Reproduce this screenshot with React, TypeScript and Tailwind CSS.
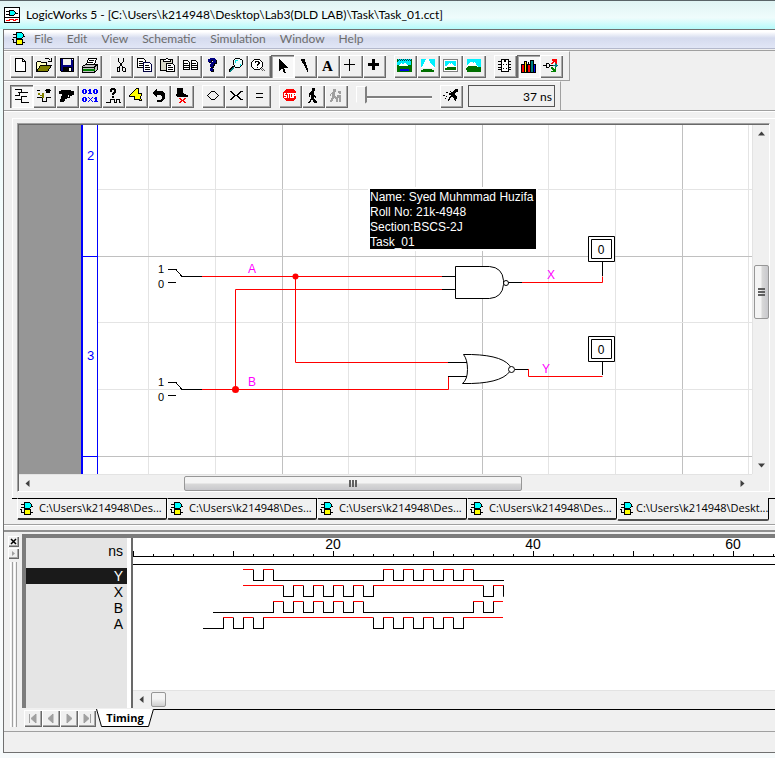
import React from "react";

type IconName = keyof typeof glyphs;

const glyphs = {
  file: (
    <g fill="#fff" stroke="#000">
      <path d="M5.500 3.500h7l3 3v10h-10z" />
      <path d="M12.500 3.500v3h3" fill="none" />
    </g>
  ),
  open: (
    <g stroke="#000" fill="none">
      <path d="M3.500 15.500v-8l1-1h3l1 1h5v3" fill="#ffffc0" />
      <path d="M3.500 16.500l4-6h11l-4 6z" fill="#808000" />
      <path d="M11.500 4.500l1-1h3l2 2M18.500 3v4M15 6.500h4" />
    </g>
  ),
  save: (
    <g>
      <path d="M4.500 3.500h13v13h-12l-1-1z" fill="#000080" stroke="#000" />
      <path d="M7 4h8v6H7z" fill="#f0f0f0" />
      <path d="M7 12h9v4H7z" fill="#000" />
      <path d="M13 13h2v3h-2zM16 4h1v1h-1z" fill="#fff" />
    </g>
  ),
  print: (
    <g stroke="#000" fill="#fff">
      <path d="M7.500 9.500l2-6h8l-2 6z" />
      <path d="M10 5.500h5M9 7.500h5" />
      <path d="M3.500 11.500l3-2h12v5l-3 3h-12z" fill="#c0c0c0" />
      <path d="M4 12.500h11l3-3M15.500 12v5" fill="none" />
      <path d="M4 14h11v1H4z" fill="#008000" stroke="#008000" />
    </g>
  ),
  cut: (
    <g stroke="#000" fill="none">
      <path d="M8.500 3v3l5 7M13.500 3v3l-5 7" />
      <path d="M7.500 12.500h2v4h-2zM12.500 12.500h2l1 1v3h-2l-1-1z" />
    </g>
  ),
  copy: (
    <g stroke="#000" fill="#fff">
      <path d="M4.500 3.500h6l2 2v7h-8z" />
      <path d="M6 6.500h4M6 8.500h5M6 10.500h5" />
      <path d="M10.500 7.500h6l2 2v7h-8z" stroke="#000040" />
      <path d="M12 10.500h4M12 12.500h5M12 14.500h5" />
    </g>
  ),
  paste: (
    <g stroke="#000" fill="none">
      <path d="M4.500 4.500h12v11h-12z" fill="#d8d8c8" />
      <path d="M7.500 6.500v-2h2l1-1h1l1 1h2v2z" fill="#fff" />
      <path d="M10.500 8.500h6l2 2v6h-8z" fill="#fff" />
      <path d="M12 10.500h3M12 12.500h5M12 14.500h5" />
    </g>
  ),
  duplicate: (
    <g stroke="#000" fill="#fff">
      <path d="M4.500 5.500h4l2 2v7h-6zM12.500 5.500h4l2 2v7h-6z" />
      <path d="M5 8.500h4M5 10.500h5M5 12.500h5M13 8.500h4M13 10.500h5M13 12.500h5" />
    </g>
  ),
  help: (
    <g>
      <path d="M7 5h1V4h6v1h1v4h-2v2h-1v2h-3v-3h1V8h2V6h-2v2H7zM9 14h3v3H9z" fill="#000" />
      <path d="M6 4h2V3h5v1h1v4h-2v2h-1v2H8V9h1V7h2V5H9v2H6zM8 13h3v3H8z" fill="#000080" />
    </g>
  ),
  zoom: (
    <g stroke="#000" fill="none">
      <path d="M10.500 3.500h4l3 2v4l-3 3h-4l-2-3v-4z" fill="#e8ffff" />
      <path d="M10.500 8v-2l2-1M14.500 10.500h1v-2" stroke="#00e0e0" />
      <path d="M9 11.500l-5 5M8 11.500l-4 4" stroke="#000" />
      <path d="M9 12.500l-4 4" stroke="#008080" />
    </g>
  ),
  find: (
    <g stroke="#000" fill="none">
      <path d="M6.500 4.500h5l3 3v4l-3 3h-5l-3-3v-4z" fill="#fff" />
      <path d="M7 7.500l1-1h2l1 1v1l-2 2M9 12v1" />
      <path d="M13 14l2 2M14 13l3 3" stroke="#606060" />
    </g>
  ),
  pointer: <path d="M8 4v12l3-3 2 5h2l-2-5h4z" fill="#000" />,
  pencil: <path d="M7 4h3l1 1v2h1v3h1v3h1v4h-1v-2h-1v-2h-1v-2h-1V9H9V8H8V6H7z" fill="#000" />,
  text: (
    <text x="5" y="16" fontFamily="Liberation Serif, serif" fontSize="15" fontWeight="700">
      A
    </text>
  ),
  plusThin: <path d="M9.500 4v12M4 9.500h11" stroke="#000" />,
  plusBold: <path d="M9 4h3v4h4v3h-4v4H9v-4H5V8h4z" fill="#000" />,
  sceneHigh: (
    <g>
      <path d="M3 4h15v13H3z" fill="#007000" />
      <path d="M4 4h13v6h1H3z" fill="#00e8f8" />
      <path d="M3.500 5.500h14" stroke="#004848" strokeDasharray="1 1" />
      <path d="M4.500 4.500h14" stroke="#004848" strokeDasharray="1 1" />
      <path d="M4 11l3-3 2 1 2-2 3 4z" fill="#fff" />
      <path d="M6 14h8v1H6z" fill="#0000e0" stroke="#0000e0" />
    </g>
  ),
  sceneMid: (
    <g>
      <path d="M4 4h14v9H4z" fill="#00f0ff" />
      <path d="M9 4h3l1 3 2 3 3 3H4l2-3z" fill="#fff" />
      <path d="M4 15l3-1h6l4 1v2H4z" fill="#007000" />
    </g>
  ),
  sceneFrame: (
    <g>
      <path d="M3.500 4.500h14v12h-14z" fill="#fff" stroke="#808080" />
      <path d="M5 6h11v5H5z" fill="#00f0ff" />
      <path d="M5 12l4-4 1 1 2-1 3 4z" fill="#fff" />
      <path d="M5 13l3-1h8v3H5z" fill="#007000" />
    </g>
  ),
  sceneLow: (
    <g>
      <path d="M4 4h14v8H4z" fill="#00f0ff" />
      <path d="M4 10l3-3h2l1 1 2-1 3 5H4z" fill="#fff" />
      <path d="M3 13l2-2h8l2 1h3v5H4z" fill="#007000" />
    </g>
  ),
  chip: (
    <g stroke="#000" fill="#fff">
      <path d="M4 6.500h13M4 9.500h13M4 12.500h13M4 14.500h13" />
      <path d="M7.500 4.500h7v12h-7z" />
      <path d="M10.500 5v1h1v-1" />
      <path d="M9 9.500h1M12 9.500h1M9 13.500h1M12 13.500h1" />
    </g>
  ),
  books: (
    <g stroke="#000">
      <path d="M4.500 9.500h3v8h-3zM10.500 9.500h3v8h-3z" fill="#f00" />
      <path d="M7.500 6.500h2v11h-2z" fill="#ffe000" />
      <path d="M13.500 5.500h3v12h-3z" fill="#008080" />
      <path d="M16.500 9.500h2v8h-2z" fill="#00f" />
      <path d="M11.500 7v2" fill="none" />
    </g>
  ),
  probe: (
    <g fill="none">
      <path d="M3 10.500h3M6.500 8.500h2l1 1v2l-1 1h-2zM10 10.500h3" stroke="#000" />
      <path d="M11 8h1V7h1V6h-1V4h5v5h-2V7h-1v1h-1v1h-2z" fill="#f00" />
      <path d="M13 10h2V8h1v1h1v1h1v1h-1v1h-1v1h-1v-2h-2z" fill="#008080" />
      <path d="M11 12h2v1h1v1h1v-2h1v5h-5v-1h2v-1h-1v-1h-1z" fill="#008000" />
    </g>
  ),
  waves: (
    <path d="M5 4.500h6v3h7M5 10.500h4v-3M8 7.500h4M11.500 11h5M5 14.500h6v-4M11.500 14v3h7" stroke="#000" fill="none" />
  ),
  waveEdit: (
    <g fill="none" stroke="#000">
      <path d="M4 5.500h3M12 5.500h6M4 12.500h5v4h4v-4h5" />
      <path d="M13 4h3v3h-3z" fill="#000" />
      <path d="M5 8h2v2h2V8h2v5H9v-2H7v-1H5z" fill="#808000" stroke="none" />
    </g>
  ),
  gun: <path d="M3 6h2V5h10v1h3v4h-2v1h-2v2h-3v1H9v2H8v1H4v-3h1v-3h1V9H3zM12 10v2h1v-2z" fill="#000" />,
  binary: (
    <g fill="#00f" fillRule="evenodd">
      <path d="M4 4h3v1h1v3H7v1H4V8H3V5h1zM5 5v3h1V5zM10 4h2v4h1v1H9V8h1V6H9V5h1zM15 4h3v1h1v3h-1v1h-3V8h-1V5h1zM16 5v3h1V5z" />
      <path d="M4 12h3v1h1v3H7v1H4v-1H3v-3h1zM5 13v3h1v-3zM9 12h1v1h1v1h1v-1h1v-1h1v1h-1v1h-1v1h1v1h1v1h-1v-1h-1v-1h-1v1h-1v1H9v-1h1v-1h1v-1h-1v-1H9zM16 12h2v4h1v1h-4v-1h1v-2h-1v-1h1z" />
    </g>
  ),
  query: (
    <g fill="none" stroke="#000">
      <path d="M8 4h1V3h4v1h1v4h-1v1h-1v1h-2V8h1V7h1V5h-2v2H8z" fill="#000" stroke="none" />
      <path d="M10 11h2v2h-2z" fill="#000" stroke="none" />
      <path d="M4 17.500h4v-3h4v3h2v-3h3v3h2" />
    </g>
  ),
  bolt: <path d="M11.500 3.500l-7 7v1h5v3h3l4 1-1-3 1-3v-1h-3v-5z" fill="#ff0" stroke="#000" />,
  undo: <path d="M4 8l5-5v3h5l3 3v5l-4 3H9v-2h3l2-2v-2l-2-1H9v3z" fill="#000" />,
  kick: (
    <g>
      <path d="M6 3h6v5h1v1h2v1h2v2H6v-1H5V9h1z" fill="#000" />
      <path d="M8 13h2v1h1v1h1v-1h1v-1h2v1h-1v1h-1v1h1v1h1v1h-2v-1h-1v-1h-1v1h-1v1H8v-1h1v-1h1v-1H9v-1H8z" fill="#f00" />
    </g>
  ),
  diamond: <path d="M5.500 10.500l4-4h3l4 4-4 4h-3z" stroke="#000" fill="none" />,
  cross: <path d="M5 6.500h1l4 4h2l4-4h2M5 14.500h1l4-4M12 10.500l4 4h2" stroke="#000" fill="none" />,
  equal: <path d="M8 8.500h7M8 12.500h7" stroke="#000" />,
  stop: (
    <g>
      <path d="M8 4h6l3 3v6l-3 3H8l-4-3V7z" fill="#f00" />
      <path d="M7 8.500H5.500v2H7v2H5M8 8.500h3M9.500 8v5M11.500 8.500h2v4h-2zM14.500 13V8.500h2v2h-2" fill="none" stroke="#fff" />
    </g>
  ),
  walk: (
    <path d="M10 3h3v3h-1v4l2 2v1l-2-1v2l3 3v1h-3l-2-4-2 4H6v-1h1l2-4V9L8 12H7V9l2-3h1z" fill="#000" />
  ),
  run: (
    <path d="M8 4h3v3h-1v4l3 2v4h-2v-3l-2-1-2 4H5v-1l2-4V8l-1 3H5V9l3-2zM13 6h3v3h-2zM12 10h4v7h-2v-4h-2z" fill="#a0a0a0" />
  ),
  sprint: (
    <g>
      <path d="M15 4h3v3h-2l-1 3 2 2-1 4h-1l-1-3-3-1-2 4H8v-1l3-5h-2V8l4-1z" fill="#000" />
      <path d="M3 10h2v1H3zM6 7h2v1H6zM10 6h1v1h-1zM6 11h1v1H6zM5 13h1v1H5z" fill="#000" />
    </g>
  ),
};

type Tool = { label: string; icon: IconName; pressed?: boolean; disabled?: boolean };

const editGroups: Tool[][] = [
  [
    { label: "New", icon: "file" },
    { label: "Open", icon: "open" },
    { label: "Save", icon: "save" },
    { label: "Print", icon: "print" },
  ],
  [
    { label: "Cut", icon: "cut" },
    { label: "Copy", icon: "copy" },
    { label: "Paste", icon: "paste" },
    { label: "Duplicate", icon: "duplicate" },
    { label: "Help topics", icon: "help" },
    { label: "Magnify", icon: "zoom" },
    { label: "Find", icon: "find" },
    { label: "Point", icon: "pointer", pressed: true },
    { label: "Zap", icon: "pencil" },
    { label: "Text", icon: "text" },
    { label: "Draw signal", icon: "plusThin" },
    { label: "Draw bus", icon: "plusBold" },
  ],
  [
    { label: "Zoom to fit", icon: "sceneHigh" },
    { label: "Zoom in", icon: "sceneMid" },
    { label: "Normal size", icon: "sceneFrame" },
    { label: "Zoom out", icon: "sceneLow" },
  ],
  [
    { label: "Parts", icon: "chip" },
    { label: "Libraries", icon: "books", pressed: true },
    { label: "Signal probe", icon: "probe" },
  ],
];

const simGroups: Tool[][] = [
  [
    { label: "Timing window", icon: "waves", pressed: true },
    { label: "Edit waveform", icon: "waveEdit" },
    { label: "Trigger", icon: "gun" },
    { label: "Binary values", icon: "binary" },
    { label: "Query signal", icon: "query" },
    { label: "Reset", icon: "bolt" },
    { label: "Restart", icon: "undo" },
    { label: "Clear unknowns", icon: "kick" },
  ],
  [
    { label: "Expand", icon: "diamond" },
    { label: "Compress", icon: "cross" },
    { label: "Normal scale", icon: "equal" },
  ],
  [
    { label: "Stop", icon: "stop" },
    { label: "Step", icon: "walk" },
    { label: "Run", icon: "run", disabled: true },
  ],
];

const raised =
  "shadow-[inset_1px_1px_0_#ffffff,inset_-1px_-1px_0_#696969,inset_-2px_-2px_0_#a8a8a8]";
const sunken =
  "bg-[#f8f8f8] shadow-[inset_1px_1px_0_#696969,inset_2px_2px_0_#a8a8a8,inset_-1px_-1px_0_#ffffff]";

function ToolButton({ label, icon, pressed, disabled }: Tool) {
  return (
    <button
      type="button"
      aria-label={label}
      aria-pressed={pressed}
      disabled={disabled}
      className={`h-[23px] w-[23px] shrink-0 ${pressed ? sunken : raised}`}
    >
      <svg width="23" height="23" shapeRendering="crispEdges" className="block">
        {glyphs[icon]}
      </svg>
    </button>
  );
}

function ToolGroups({ groups }: { groups: Tool[][] }) {
  return (
    <>
      {groups.map((group, i) => (
        <div key={i} className="flex">
          {group.map((tool) => (
            <ToolButton key={tool.label} {...tool} />
          ))}
        </div>
      ))}
    </>
  );
}

function GateIcon() {
  return (
    <svg width="14" height="14" shapeRendering="crispEdges" className="block shrink-0">
      <path d="M1 2.500h4M1 5.500h4M10 4.500h3M0 7.500h2M1.500 8v3M2 10.500h3M10 10.500h3" stroke="#000" />
      <path d="M4.500.5h5l2 2v2l-2 2h-5z" fill="#0ff" stroke="#000" />
      <path d="M4.500 7.500h6v5h-6z" fill="#ff0" stroke="#000" />
    </svg>
  );
}

function TitleBar() {
  return (
    <header className="flex h-[29px] items-center gap-[6px] border-t border-[#5a6468] bg-linear-to-b from-[#e0f4f4] via-[#effcfc] via-60% to-[#b4fafa] pl-1">
      <svg width="16" height="16" shapeRendering="crispEdges">
        <path d="M.5.500h15v15H.5z" fill="#fff" stroke="#000" />
        <path d="M1 10.500h14" stroke="#000" />
        <path d="M2 4.500h3M2 7.500h3M11 6.500h3" stroke="#000" />
        <path d="M5.500 3.500h4l2 2v1l-2 2h-4z" fill="#0ff" stroke="#000" />
        <path d="M2 13.500h3v-1h4v1h2v-1h3" stroke="#f00" fill="none" />
      </svg>
      <h1 className="text-[12px] leading-4 whitespace-nowrap text-black">
        LogicWorks 5 - [C:\Users\k214948\Desktop\Lab3(DLD LAB)\Task\Task_01.cct]
      </h1>
    </header>
  );
}

const menus = ["File", "Edit", "View", "Schematic", "Simulation", "Window", "Help"];

function MenuBar() {
  return (
    <nav className="flex h-[19px] items-center border-b border-[#b4b9cc] bg-linear-to-b from-white from-10% via-[#d5dbee] via-45% to-[#e1e6f6] pl-2">
      <GateIcon />
      <div className="flex gap-[14px] pl-2">
        {menus.map((m) => (
          <button key={m} type="button" className="text-[12px] leading-4 text-[#6d6d6d]">
            {m}
          </button>
        ))}
      </div>
    </nav>
  );
}

function Toolbars() {
  return (
    <div className="mt-px border-y border-[#a0a0a0]">
      <div className="flex w-fit items-start gap-2 border-t border-r border-b border-t-white border-r-[#a0a0a0] border-b-[#a0a0a0] pt-[3px] pr-[6px] pb-[2px] pl-[6px]">
        <ToolGroups groups={editGroups} />
      </div>
      <div className="flex w-fit items-start gap-2 border-t border-r border-t-white border-r-[#a0a0a0] pt-[3px] pr-[5px] pb-[2px] pl-[6px]">
        <ToolGroups groups={simGroups} />
        <input
          type="range"
          aria-label="Simulation speed"
          defaultValue={0}
          className="h-[23px] w-[76px] appearance-none bg-transparent [&::-webkit-slider-runnable-track]:h-[22px] [&::-webkit-slider-runnable-track]:bg-[linear-gradient(#808080,#808080),linear-gradient(#ffffff,#ffffff)] [&::-webkit-slider-runnable-track]:bg-[length:100%_2px,100%_1px] [&::-webkit-slider-runnable-track]:bg-[position:0_10px,0_12px] [&::-webkit-slider-runnable-track]:bg-no-repeat [&::-webkit-slider-thumb]:h-[21px] [&::-webkit-slider-thumb]:w-[11px] [&::-webkit-slider-thumb]:appearance-none [&::-webkit-slider-thumb]:border-t [&::-webkit-slider-thumb]:border-r-2 [&::-webkit-slider-thumb]:border-l [&::-webkit-slider-thumb]:border-t-white [&::-webkit-slider-thumb]:border-r-[#808080] [&::-webkit-slider-thumb]:border-l-white [&::-webkit-slider-thumb]:bg-[#f0f0f0] [&::-webkit-slider-thumb]:[clip-path:polygon(0_0,100%_0,100%_78%,50%_100%,0_78%)]"
        />
        <div className="flex gap-[5px]">
          <ToolButton label="Full speed" icon="sprint" />
          <input
            readOnly
            aria-label="Simulation time"
            value="37 ns"
            className="h-[22px] w-[87px] border border-[#555555] bg-[#f0f0f0] pr-[2px] text-right text-[12px] text-black"
          />
        </div>
      </div>
    </div>
  );
}

const range = (n: number) => Array.from({ length: n }, (_, i) => i);

function InputSwitch({ y }: { y: number }) {
  return (
    <g>
      <g fill="#000" fontSize="11">
        <text x="139" y={y - 3}>1</text>
        <text x="139" y={y + 12}>0</text>
      </g>
      <path
        d={`M149 ${y - 6.5}h8l6 7h20M149 ${y + 6.5}h8`}
        stroke="#000"
        fill="none"
        shapeRendering="crispEdges"
      />
    </g>
  );
}

function OutputProbe({ y }: { y: number }) {
  return (
    <g fill="#fff" stroke="#000">
      <path d={`M569.5 ${y + 0.5}h26v25h-26zM572.5 ${y + 3.5}h20v19h-20z`} />
      <text x="582" y={y + 18} fill="#000" stroke="none" fontSize="12" textAnchor="middle">
        0
      </text>
    </g>
  );
}

function Schematic() {
  const note = ["Name: Syed Muhmmad Huzifa", "Roll No: 21k-4948", "Section:BSCS-2J", "Task_01"];
  return (
    <svg
      role="img"
      aria-label="Schematic of a NAND and a NOR gate"
      className="block h-[349px] w-full bg-white font-['Liberation_Sans',Arial,sans-serif]"
    >
      {range(40).map((i) => (
        <path
          key={i}
          d={`M${129.5 + Math.ceil((i * 200) / 3)} 0v349`}
          stroke={i % 3 === 2 ? "#c0c0c0" : "#e4e4e4"}
        />
      ))}
      {range(5).map((i) => (
        <path
          key={i}
          d={`M79 ${64.5 + Math.round((i * 200) / 3)}h3000`}
          stroke={i % 3 === 1 ? "#c0c0c0" : "#e4e4e4"}
        />
      ))}
      <path d="M0 0h62v349H0z" fill="#969696" />
      <path d="M62 0h2v349h-2z" fill="#00f" />
      <path d="M78.500 0v349M64 131.500h14M64 331.500h14" stroke="#00f" />
      <g fill="#00f" fontSize="13">
        <text x="68" y="35">2</text>
        <text x="68" y="235">3</text>
      </g>

      <g stroke="#f00" fill="none">
        <path d="M183 151.500h240M276.500 151v86.500h153M216.500 264v-99.500h207M183 264.500h246.500v-13" />
        <path d="M503 157.500h80.500v-6M509.500 244v7.500h74" />
      </g>
      <g fill="#f00">
        <circle cx="276.500" cy="151.500" r="3" />
        <circle cx="216.500" cy="264.500" r="3.500" />
      </g>
      <InputSwitch y={151} />
      <InputSwitch y={264} />
      <g stroke="#000" fill="none">
        <path d="M423 151.500h13M423 164.500h13M489 157.500h14M583.500 151v-15" />
        <path d="M436.500 141.500h34q13 1 14 14v4q-1 13-14 14h-34z" fill="#fff" />
        <circle cx="487" cy="158" r="2.500" fill="#fff" />
        <path
          d="M444.500 229.500h8q34 1 40 14q-6 14-40 15h-9q5-4 5-14t-4-15z"
          fill="#fff"
        />
        <path d="M429 237.500h19M429 251.500h19M496 244.500h13M583.500 237v13" />
        <circle cx="492.500" cy="244.500" r="3" fill="#fff" />
      </g>
      <OutputProbe y={111} />
      <OutputProbe y={211} />
      <g fill="#f0f" fontSize="12">
        <text x="229" y="148">A</text>
        <text x="229" y="261">B</text>
        <text x="528" y="154">X</text>
        <text x="523" y="248">Y</text>
      </g>

      <path d="M349 62h170v64H349z" fill="#fff" />
      <path d="M351 64h166v60H351z" fill="#000" />
      <g fill="#fff" fontSize="12">
        {note.map((line, i) => (
          <text key={line} x="351" y={76 + i * 15}>
            {line}
          </text>
        ))}
      </g>
    </svg>
  );
}

function Arrow({ d }: { d: string }) {
  return (
    <svg width="9" height="9" className="block shrink-0" fill="#404040">
      <path d={d} />
    </svg>
  );
}

const arrows = {
  left: "M6.500 1v7L2.500 4.500z",
  right: "M2.500 1v7l4-3.500z",
  up: "M1 6.500h7L4.500 2.500z",
  down: "M1 2.500h7L4.500 6.500z",
};

function DocumentView() {
  return (
    <main className="border-t border-white pt-[6px] pl-2">
      <div className="border-t border-l border-white pt-1 pr-[5px] pb-[6px] pl-1">
        <div className="border-t border-r border-b border-l border-t-[#a0a0a0] border-r-white border-b-white border-l-[#a0a0a0]">
          <div className="flex border-t border-l border-[#696969]">
            <div className="min-w-0 flex-1">
              <Schematic />
              <div className="flex h-[17px] items-center border-t border-[#e3e3e3] bg-[#f0f0f0] pr-[5px] pl-1">
                <Arrow d={arrows.left} />
                <div className="flex flex-1 pl-[21%]">
                  <div className="flex h-[15px] w-[61%] items-center justify-center gap-px rounded-xs border border-[#979797] bg-linear-to-b from-[#f4f4f4] from-45% via-[#d8d8d8] via-55% to-[#c8c8cc]">
                    <i className="h-[7px] w-[2px] bg-[#606060]" />
                    <i className="h-[7px] w-[2px] bg-[#606060]" />
                    <i className="h-[7px] w-[2px] bg-[#606060]" />
                  </div>
                </div>
                <Arrow d={arrows.right} />
              </div>
            </div>
            <div className="mb-[17px] flex w-[17px] flex-col items-center border-l border-[#e3e3e3] bg-[#f0f0f0] pt-1 pb-1">
              <Arrow d={arrows.up} />
              <div className="flex flex-1 flex-col pt-[127px]">
                <div className="flex h-[54px] w-[15px] flex-col items-center justify-center gap-px rounded-xs border border-[#979797] bg-linear-to-r from-[#f4f4f4] from-45% via-[#d8d8d8] via-55% to-[#c8c8cc]">
                  <i className="h-[2px] w-[7px] bg-[#606060]" />
                  <i className="h-[2px] w-[7px] bg-[#606060]" />
                  <i className="h-[2px] w-[7px] bg-[#606060]" />
                </div>
              </div>
              <Arrow d={arrows.down} />
            </div>
          </div>
        </div>
      </div>
      <DocumentTabs />
    </main>
  );
}

const tabs = [
  "C:\\Users\\k214948\\Des...",
  "C:\\Users\\k214948\\Des...",
  "C:\\Users\\k214948\\Des...",
  "C:\\Users\\k214948\\Des...",
  "C:\\Users\\k214948\\Deskt...",
];

function DocumentTabs() {
  return (
    <div role="tablist" className="flex h-[26px] items-start font-['Open_Sans',Tahoma,sans-serif] text-[11px]">
      <div className="h-px w-[5px] bg-black" />
      {tabs.map((t, i) => {
        const active = i === tabs.length - 1;
        return (
          <button
            key={i}
            type="button"
            role="tab"
            aria-selected={active}
            className={
              active
                ? "flex h-[23px] w-[152px] shrink-0 items-center gap-[2px] rounded-b-[2px] border-r border-b-2 border-l border-black border-b-[#505050] border-l-white pl-[2px] whitespace-nowrap"
                : "flex h-[22px] w-[150px] shrink-0 items-center gap-[5px] rounded-b-[2px] border-t border-r border-b-2 border-l border-black border-b-[#303030] border-l-white pl-[2px] whitespace-nowrap"
            }
          >
            <GateIcon />
            {t}
          </button>
        );
      })}
      <div className="h-px flex-1 bg-black" />
    </div>
  );
}

/* Each trace lists the times (ns) at which it toggles, beginning at its first sample. */
const traces = [
  { name: "Y", start: 11, high: true, toggles: [12, 13, 14, 25, 26, 27, 28, 29, 30, 31, 32, 33, 34] },
  { name: "X", start: 11, high: true, toggles: [15, 16, 17, 18, 19, 20, 21, 22, 23, 24, 35, 36, 37] },
  { name: "B", start: 8, high: false, toggles: [14, 15, 16, 17, 18, 19, 20, 21, 22, 23, 34, 35, 36] },
  { name: "A", start: 7, high: false, toggles: [9, 10, 11, 12, 13, 24, 25, 26, 27, 28, 29, 30, 31, 32, 33] },
];

function Trace({ row }: { row: number }) {
  const { start, high, toggles } = traces[row];
  const top = 31.5 + row * 16;
  let highs = "";
  let lows = "";
  let t = start;
  let up = high;
  for (const next of [...toggles, 37]) {
    const seg = `M${t * 10} ${up ? top : top + 11}H${next * 10 + (up ? 0 : 1)}`;
    if (up) highs += seg;
    else if (t < 37) lows += seg;
    if (toggles.includes(next)) lows += `M${next * 10 + 0.5} ${top}v11`;
    t = next;
    up = !up;
  }
  return (
    <g>
      <path d={lows} stroke="#000" />
      <path d={highs} stroke="#f00" />
    </g>
  );
}

function Waveforms() {
  return (
    <svg
      role="img"
      aria-label="Timing diagram"
      className="block h-[152px] w-full overflow-visible bg-white font-['Liberation_Sans',Arial,sans-serif]"
    >
      <path d="M0 18.500h3000M0 26.500h3000" stroke="#000" />
      {range(100).map((i) => (
        <path key={i} d={`M${i * 20 + 0.5} 18v${i % 5 === 0 ? -5 : -2}`} stroke="#000" />
      ))}
      {range(3).map((i) => (
        <text key={i} x={(i + 1) * 200} y="11" fontSize="14" textAnchor="middle">
          {(i + 1) * 20}
        </text>
      ))}
      {traces.map((_, row) => (
        <Trace key={row} row={row} />
      ))}
    </svg>
  );
}

const pagers = [
  { label: "First", d: "M5.500 4v9M12 4v9L7 8.500z" },
  { label: "Previous", d: "M11 4v9L6 8.500z" },
  { label: "Next", d: "M7 4v9l5-4.500z" },
  { label: "Last", d: "M12.500 4v9M6 4v9l5-4.500z" },
];

function TimingDock() {
  return (
    <section className="flex border-t-2 border-[#909090] pt-[2px]">
      <div className="flex w-[18px] shrink-0 flex-col items-center gap-px pt-[2px] pl-px">
        <button type="button" aria-label="Close" className={`h-[11px] w-[11px] ${raised}`}>
          <svg width="11" height="11" className="block">
            <path d="M3 3l5 5M8 3l-5 5" stroke="#000" strokeWidth="1.500" />
          </svg>
        </button>
        <button type="button" aria-label="Expand" className={`h-[11px] w-[11px] ${raised}`}>
          <svg width="11" height="11" className="block">
            <path d="M4 3v5l3-2.500z" fill="#a0a0a0" />
          </svg>
        </button>
        <div className="flex flex-1 gap-px pt-[2px]">
          <i className="w-[3px] border-r border-l border-r-[#a0a0a0] border-l-white" />
          <i className="w-[3px] border-r border-l border-r-[#a0a0a0] border-l-white" />
        </div>
      </div>
      <div className="min-w-0 flex-1">
        <div className="flex border-t-4 border-l-4 border-[#7c7c7c]">
          <div className="w-[101px] shrink-0 bg-[#e5e5e5] text-right font-['Liberation_Sans',Arial,sans-serif] text-[14px] leading-4">
            <div className="h-[30px] pt-[5px] pr-1">ns</div>
            {traces.map((t) => (
              <div key={t.name} className={t.name === "Y" ? "bg-[#1a1a1a] pr-1 text-white" : "pr-1"}>
                {t.name}
              </div>
            ))}
          </div>
          <div className="w-1 shrink-0 bg-white" />
          <div className="min-w-0 flex-1 border-l-2 border-[#696969] bg-white">
            <Waveforms />
            <div className="flex h-[18px] items-center gap-[5px] border-t border-[#e3e3e3] bg-[#f0f0f0] pl-1">
              <Arrow d={arrows.left} />
              <div className="h-[15px] w-[15px] rounded-xs border border-[#979797] bg-linear-to-b from-[#f4f4f4] from-45% to-[#cfcfcf]" />
            </div>
          </div>
        </div>
        <div className="flex h-[19px] items-end pl-[2px]">
          {pagers.map((p) => (
            <button key={p.label} type="button" aria-label={p.label} className={`h-[17px] w-[18px] ${raised}`}>
              <svg width="18" height="17" className="block" fill="#a0a0a0" stroke="#a0a0a0">
                <path d={p.d} strokeWidth="1" />
              </svg>
            </button>
          ))}
          <button type="button" className="grid h-[18px] w-[58px] font-['Open_Sans',sans-serif] text-[11px] leading-[17px] font-bold">
            <svg width="58" height="18" className="col-start-1 row-start-1 block">
              <path d="M.5 0l5 17.500h47L57.500 0z" fill="#fff" />
              <path d="M.5 0l5 17.500h47L57.500 0" fill="none" stroke="#000" />
            </svg>
            <span className="col-start-1 row-start-1 text-center">Timing</span>
          </button>
          <div className="h-[18px] flex-1 border-t border-black" />
        </div>
      </div>
    </section>
  );
}

export default function App() {
  return (
    <div className="overflow-hidden bg-linear-to-b from-[#e9fbfb] via-white via-60% to-[#f6fafb] pb-[5px] font-[Lato,'Segoe_UI',sans-serif] text-black">
      <TitleBar />
      <div className="ml-[3px] border-t border-b border-l border-[#707070] bg-[#f0f0f0]">
        <MenuBar />
        <Toolbars />
        <DocumentView />
        <div className="mb-1 border-t border-b border-t-[#a0a0a0] border-b-white" />
        <TimingDock />
        <footer className="mt-1 h-[21px] border-t border-[#a0a0a0]" />
      </div>
    </div>
  );
}
